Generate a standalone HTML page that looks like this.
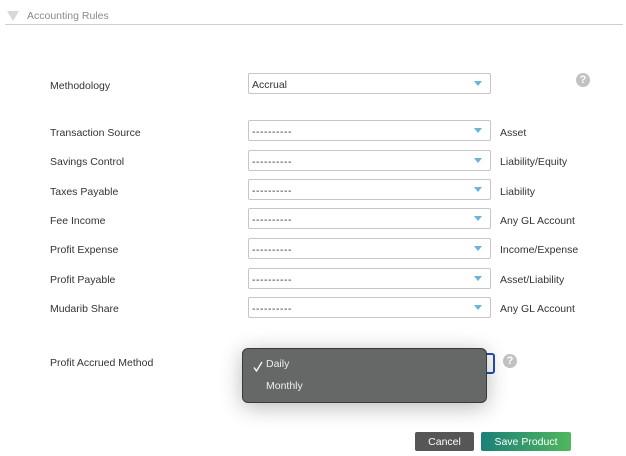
<!DOCTYPE html>
<html><head><meta charset="utf-8">
<style>
html,body{margin:0;padding:0;background:#fff;}
body{width:626px;height:456px;position:relative;overflow:hidden;font-family:"Liberation Sans",sans-serif;font-size:10.5px;color:#333;}
#w{position:absolute;left:0;top:0;width:626px;height:456px;filter:blur(.3px);}
.t{position:absolute;white-space:nowrap;line-height:14px;margin-top:1px;}
.s{position:absolute;left:248px;width:241px;height:18.5px;border:1px solid #c6c6c6;border-radius:2px;background:#fff;box-sizing:content-box;}
.s span{position:absolute;left:3px;top:4px;line-height:14px;white-space:nowrap;}
.s span.d{letter-spacing:.5px;}
.s i{position:absolute;left:225px;top:6.5px;width:0;height:0;border-left:4.5px solid transparent;border-right:4.5px solid transparent;border-top:5px solid #6bb3dc;}
.q{position:absolute;width:14px;height:14px;border-radius:50%;background:#c2c2c2;color:#fff;font-size:11px;font-weight:bold;line-height:14px;text-align:center;}
.b{position:absolute;top:432px;height:19px;line-height:20px;border-radius:2px;color:#fff;text-align:center;font-size:10.5px;}
</style></head><body><div id="w">
<div style="position:absolute;left:7px;top:11px;width:0;height:0;border-left:6px solid transparent;border-right:6px solid transparent;border-top:10px solid #d8d8d8;"></div>
<div class="t" style="left:27px;top:8px;color:#8a8a8a;">Accounting Rules</div>
<div style="position:absolute;left:5px;top:24px;width:618px;height:1px;background:#cfcfcf;"></div>

<div class="t" style="left:50px;top:78px;">Methodology</div>
<div class="s" style="top:73px;"><span>Accrual</span><i></i></div>
<div class="q" style="left:576px;top:73px;">?</div>

<div class="t" style="left:50px;top:125px;">Transaction Source</div>
<div class="s" style="top:120px;"><span class="d">----------</span><i></i></div>
<div class="t" style="left:500px;top:125px;">Asset</div>

<div class="t" style="left:50px;top:154px;">Savings Control</div>
<div class="s" style="top:150px;"><span class="d">----------</span><i></i></div>
<div class="t" style="left:500px;top:154px;">Liability/Equity</div>

<div class="t" style="left:50px;top:184px;">Taxes Payable</div>
<div class="s" style="top:179px;"><span class="d">----------</span><i></i></div>
<div class="t" style="left:500px;top:184px;">Liability</div>

<div class="t" style="left:50px;top:213px;">Fee Income</div>
<div class="s" style="top:208px;"><span class="d">----------</span><i></i></div>
<div class="t" style="left:500px;top:213px;">Any GL Account</div>

<div class="t" style="left:50px;top:242px;">Profit Expense</div>
<div class="s" style="top:238px;"><span class="d">----------</span><i></i></div>
<div class="t" style="left:500px;top:242px;">Income/Expense</div>

<div class="t" style="left:50px;top:272px;">Profit Payable</div>
<div class="s" style="top:268px;"><span class="d">----------</span><i></i></div>
<div class="t" style="left:500px;top:272px;">Asset/Liability</div>

<div class="t" style="left:50px;top:301px;">Mudarib Share</div>
<div class="s" style="top:297px;"><span class="d">----------</span><i></i></div>
<div class="t" style="left:500px;top:301px;">Any GL Account</div>

<div class="t" style="left:50px;top:355px;">Profit Accrued Method</div>
<div style="position:absolute;left:470px;top:353px;width:21px;height:17px;border:2px solid #1f4fb5;border-radius:3px;background:#fff;"></div>
<div class="q" style="left:503px;top:354px;">?</div>

<div style="position:absolute;left:242px;top:348px;width:245px;height:55px;box-sizing:border-box;background:#666867;border:1px solid #3a3a3a;border-radius:6px;box-shadow:0 4px 22px rgba(0,0,0,.28);color:#eee;">
<svg style="position:absolute;left:10px;top:12px;" width="10" height="11" viewBox="0 0 10 11"><path d="M1 6.5 L3.5 10 L9 1" fill="none" stroke="#fff" stroke-width="1.3"/></svg>
<div class="t" style="left:23px;top:7px;">Daily</div>
<div class="t" style="left:23px;top:29px;">Monthly</div>
</div>

<div class="b" style="left:415px;width:59px;background:#565656;">Cancel</div>
<div class="b" style="left:481px;width:90px;background:linear-gradient(90deg,#1c8079,#4fb75c);">Save Product</div>
</div></body></html>
